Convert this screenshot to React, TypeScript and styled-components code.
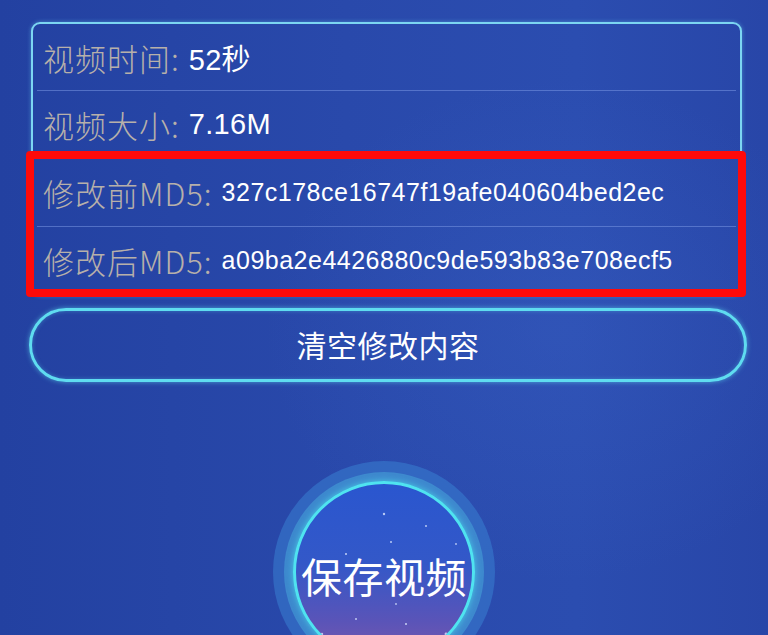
import React from 'react';
import styled, { createGlobalStyle } from 'styled-components';

const GlobalStyle = createGlobalStyle`
  html, body {
    margin: 0;
    padding: 0;
    background: #2646a6;
  }
  * {
    box-sizing: border-box;
  }
`;

const cjk = `"Noto Sans CJK SC", "Noto Sans", sans-serif`;
const latin = `"Liberation Sans", Arial, "Noto Sans CJK SC", sans-serif`;

const Page = styled.div`
  width: 768px;
  height: 635px;
  overflow: hidden;
  display: flex;
  flex-direction: column;
  background:
    radial-gradient(ellipse 420px 360px at 560px 330px, rgba(60, 100, 200, 0.3), transparent 70%),
    linear-gradient(90deg, #2341a1 0%, #2949ab 45%, #2b4db0 75%, #2846a8 100%);
  & > * {
    flex-shrink: 0;
  }
`;

const Card = styled.div`
  margin: 22px 26px 0 31px;
  border: 2px solid #7cd6f2;
  border-radius: 9px;
  box-shadow: 0 0 4px rgba(110, 210, 245, 0.45);
  display: flex;
  flex-direction: column;
`;

const Row = styled.div<{ $h: number }>`
  height: ${p => p.$h}px;
  display: flex;
  align-items: center;
  padding-left: 10px;
  white-space: nowrap;
`;

const Divider = styled.div`
  height: 1px;
  margin: 0 4px;
  background: rgba(120, 150, 225, 0.55);
`;

const Label = styled.span`
  font-family: ${cjk};
  font-weight: 300;
  font-size: 31px;
  letter-spacing: 1px;
  color: #b7b0aa;
  margin-right: 9px;
`;

const Value = styled.span<{ $md5?: boolean }>`
  font-family: ${latin};
  font-size: ${p => (p.$md5 ? 25 : 29)}px;
  letter-spacing: ${p => (p.$md5 ? 0.5 : 0.3)}px;
  color: #ffffff;
`;

const Highlight = styled.div`
  position: relative;
  display: flex;
  flex-direction: column;
  &::after {
    content: '';
    position: absolute;
    inset: -8px -6px -3px -7px;
    border: 8px solid #ff0a0a;
    border-radius: 4px;
    pointer-events: none;
  }
`;

const ClearButton = styled.button`
  margin: 12px 21px 0 29px;
  height: 74px;
  border-radius: 37px;
  border: 3px solid #5fdcf0;
  box-shadow: 0 0 5px rgba(95, 220, 240, 0.6), inset 0 0 4px rgba(95, 220, 240, 0.35);
  background: transparent;
  color: #ffffff;
  font-family: ${cjk};
  font-size: 30px;
  font-weight: 400;
  letter-spacing: 0.5px;
  display: flex;
  align-items: center;
  justify-content: center;
  padding: 0 0 2px;
  cursor: pointer;
`;

const Halo = styled.div`
  margin: 79px auto 0;
  width: 222px;
  height: 222px;
  border-radius: 50%;
  background: rgba(56, 128, 210, 0.55);
  display: flex;
  align-items: center;
  justify-content: center;
`;

const Ring = styled.div`
  width: 200px;
  height: 200px;
  border-radius: 50%;
  background: rgba(70, 160, 215, 0.6);
  display: flex;
  align-items: center;
  justify-content: center;
`;

const Disc = styled.div`
  position: relative;
  width: 182px;
  height: 182px;
  border-radius: 50%;
  border: 3px solid #4fe3f0;
  box-shadow: 0 0 6px rgba(80, 230, 240, 0.7);
  background: linear-gradient(180deg, #2a56cf 0%, #3358c8 45%, #5a54b8 78%, #7a58ac 100%);
  display: flex;
  align-items: center;
  justify-content: center;
  overflow: hidden;
`;

const Stars = styled.svg`
  position: absolute;
  inset: 0;
`;

const SaveText = styled.span`
  position: relative;
  font-family: ${cjk};
  font-size: 41px;
  font-weight: 400;
  color: #ffffff;
  padding-top: 6px;
  letter-spacing: 0.5px;
`;

const stars: [number, number, number][] = [
  [88, 30, 1.2], [130, 42, 1], [50, 70, 1.1], [95, 58, 1], [140, 95, 1.3],
  [40, 108, 1], [26, 150, 1.2], [60, 135, 1], [110, 140, 1.1], [150, 150, 1.4],
  [80, 160, 1], [120, 170, 1.2], [45, 175, 1], [100, 120, 0.9], [160, 60, 0.9],
];

export default function App() {
  return (
    <>
      <GlobalStyle />
      <Page>
        <Card>
          <Row $h={66}>
            <Label>视频时间:</Label>
            <Value>52秒</Value>
          </Row>
          <Divider />
          <Row $h={67}>
            <Label>视频大小:</Label>
            <Value>7.16M</Value>
          </Row>
          <Divider />
          <Highlight>
            <Row $h={67}>
              <Label>修改前MD5:</Label>
              <Value $md5>327c178ce16747f19afe040604bed2ec</Value>
            </Row>
            <Divider />
            <Row $h={67}>
              <Label>修改后MD5:</Label>
              <Value $md5>a09ba2e4426880c9de593b83e708ecf5</Value>
            </Row>
          </Highlight>
        </Card>
        <ClearButton>清空修改内容</ClearButton>
        <Halo>
          <Ring>
            <Disc>
              <Stars viewBox="0 0 176 176" width="176" height="176">
                {stars.map(([x, y, r], i) => (
                  <circle key={i} cx={x} cy={y} r={r} fill="#dbe6ff" opacity={0.8} />
                ))}
              </Stars>
              <SaveText>保存视频</SaveText>
            </Disc>
          </Ring>
        </Halo>
      </Page>
    </>
  );
}
